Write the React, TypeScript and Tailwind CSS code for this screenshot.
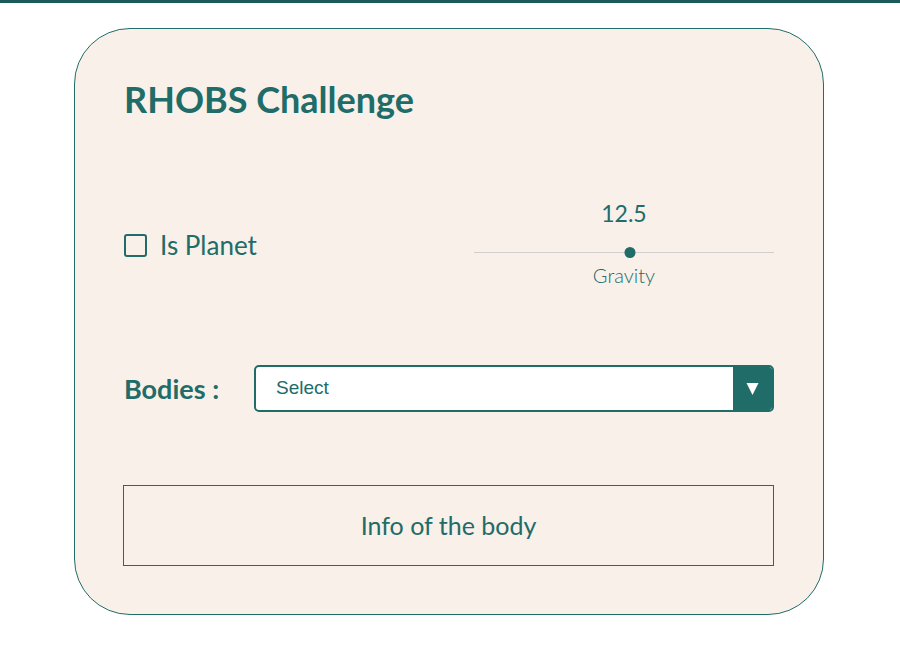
import React, { useState } from 'react';

const teal = 'text-[#206c68]';

const GravitySlider: React.FC<{ value: number; min: number; max: number }> = ({ value, min, max }) => {
    const pct = ((value - min) / (max - min)) * 100;
    return (
        <div className="flex w-[300px] flex-col items-center">
            <div className={`h-[28px] text-[23px] leading-[28px] ${teal}`}>{value}</div>
            <div className="relative mt-[18px] h-[15px] w-full">
                <div className="absolute left-0 right-0 top-[7px] h-px bg-[#cfcfcf]" />
                <div
                    className="absolute top-[2px] h-[11px] w-[11px] -translate-x-1/2 rounded-full bg-[#206c68]"
                    style={{ left: `${pct}%` }}
                />
            </div>
            <div className={`mt-[3px] h-[24px] text-[20px] font-light leading-[24px] ${teal}`}>Gravity</div>
        </div>
    );
};

const App: React.FC = () => {
    const [isPlanet, setIsPlanet] = useState(false);

    return (
        <div className="min-h-[661px] bg-white font-['Lato','Liberation_Sans',sans-serif]">
            <div className="h-[3px] bg-[#1b5c5a]" />
            <div className="ml-[74px] mt-[25px] w-[750px] rounded-[56px] border border-[#206c68] bg-[#f9f0ea] px-[49px] pt-[50px] pb-[48px]">
                <h1 className={`h-[40px] text-[36px] font-bold leading-[40px] ${teal}`}>RHOBS Challenge</h1>

                <div className="mt-[80px] flex items-center justify-between">
                    <label className="flex cursor-pointer items-center gap-[13px] pt-[4px]">
                        <span
                            onClick={() => setIsPlanet(!isPlanet)}
                            className="flex h-[23px] w-[23px] items-center justify-center rounded-[3px] border-[2.5px] border-[#206c68]"
                        >
                            {isPlanet && <span className="h-[11px] w-[11px] bg-[#206c68]" />}
                        </span>
                        <span className={`text-[26px] leading-[30px] ${teal}`}>Is Planet</span>
                    </label>
                    <GravitySlider value={12.5} min={0} max={24} />
                </div>

                <div className="mt-[78px] flex items-center">
                    <div className={`w-[130px] text-[27px] font-bold leading-[32px] ${teal}`}>Bodies :</div>
                    <div className="flex h-[47px] w-[520px] overflow-hidden rounded-[5px] border-2 border-[#206c68] bg-white">
                        <div className="flex flex-1 items-center pl-[20px] font-['Liberation_Sans',sans-serif] text-[19px] text-[#206c68]">
                            Select
                        </div>
                        <div className="flex w-[39px] items-center justify-center bg-[#206c68]">
                            <svg width="13" height="13" viewBox="0 0 13 13">
                                <polygon points="0.5,1 12.5,1 6.5,13" fill="white" />
                            </svg>
                        </div>
                    </div>
                </div>

                <div className="-ml-px mt-[73px] flex h-[81px] items-center justify-center border border-[#206c68]">
                    <span className={`text-[25px] ${teal}`}>Info of the body</span>
                </div>
            </div>
        </div>
    );
};

export default App;
